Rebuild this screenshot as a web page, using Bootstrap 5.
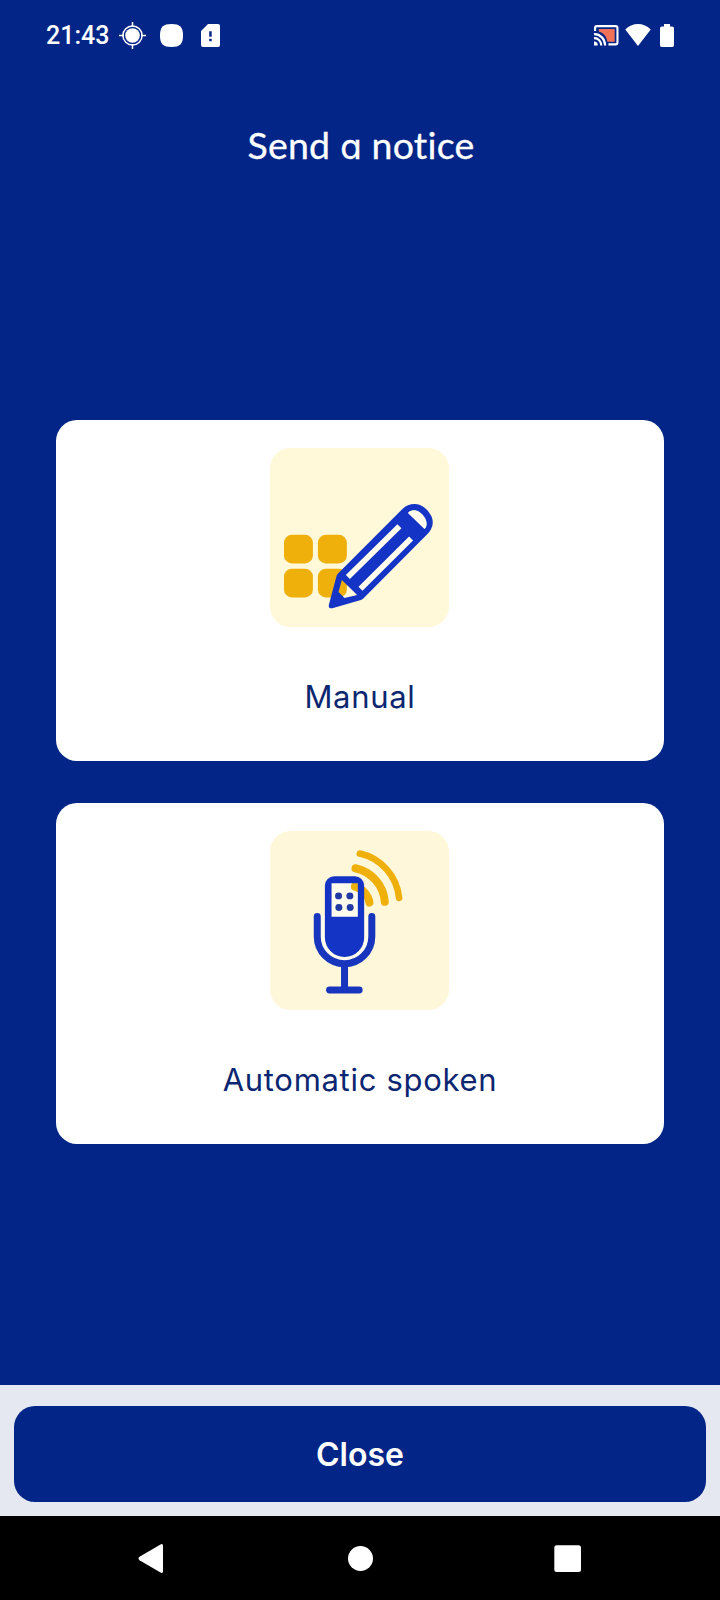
<!DOCTYPE html>
<html lang="en">
<head>
<meta charset="utf-8">
<meta name="viewport" content="width=device-width, initial-scale=1">
<title>Send a notice</title>
<link href="https://cdn.jsdelivr.net/npm/bootstrap@5.3.0/dist/css/bootstrap.min.css" rel="stylesheet">
<style>
body{background:#032587;font-family:Inter,"Noto Sans",sans-serif;height:1600px;overflow:hidden}
svg{display:block;flex:none}
.status{height:70px;padding:0 46px 0 46px}
.clock{font:500 25px/30px Roboto,sans-serif;width:73px;padding-top:2px}
.blob-icon{margin-left:14px}
.sim-icon{margin-left:18px}
.wifi-icon{margin-left:6px}
.battery-icon{margin-left:9px}
.title{font:400 37.5px/46px Lato,sans-serif;margin:52px 0 0;height:46px;white-space:nowrap;font-variant-ligatures:none;letter-spacing:.2px;-webkit-text-stroke:.3px #fff;padding-left:2px}
.title span{font-family:Inter,sans-serif;font-size:35px;font-feature-settings:"cv11"}
.choices{margin-top:252px;padding:0 56px;gap:42px}
.choice{height:341px;border-radius:21px;padding-top:28px;color:#0c2671;font-size:31px;font-weight:400;line-height:40px;letter-spacing:.7px}
.choice svg{width:179px;height:179px;margin:0 1px 50px 0}
.footer-bar{height:131px;background:#e5e8f0;padding:21px 14px 14px}
.btn-close-notice,.btn-close-notice:hover{height:96px;border-radius:21px;background:#032587;color:#fff;font-size:32px;font-weight:600;border:0;padding-top:8px}
.sysnav{height:84px;background:#000}
</style>
</head>
<body class="d-flex flex-column">
<header class="status d-flex justify-content-between align-items-center text-white">
  <div class="d-flex align-items-center">
    <div class="clock">21:43</div>
    <svg width="27" height="27" viewBox="0 0 27 27"><g fill="none" stroke="#fff" stroke-width="1.5"><circle cx="13.5" cy="13.5" r="9.6"/><path d="M13.5 0v5M13.5 22v5M0 13.5h5M22 13.5h5"/></g><circle cx="13.5" cy="13.5" r="7.3" fill="#fff"/></svg>
    <svg class="blob-icon" width="23" height="23" viewBox="0 0 23 23"><path fill="#fff" d="M11.5 0C20 0 23 3 23 11.5S20 23 11.5 23 0 20 0 11.5 3 0 11.5 0Z"/></svg>
    <svg class="sim-icon" width="19" height="23" viewBox="0 0 19 23"><path fill="#fff" fill-rule="evenodd" d="M7 0h10q2 0 2 2v19q0 2-2 2H2q-2 0-2-2V7ZM8.2 7.3v5.5h2.5V7.3Zm0 7.5v2.4h2.5v-2.4Z"/></svg>
  </div>
  <div class="d-flex align-items-center">
    <svg width="25" height="21" viewBox="0 0 26 21" preserveAspectRatio="none"><path d="M5 4h16.5v12.8H14Q12 8 5 6.6Z" fill="#f27258"/><g fill="none" stroke="#fff"><path stroke-width="2.2" d="M1.1 6V3q0-1.9 1.9-1.9h19.5q1.9 0 1.9 1.9v14.5q0 1.9-1.9 1.9H15"/><path stroke-width="2.2" d="M0 9.2A11 11 0 0 1 11.5 20.5M0 13.2A7 7 0 0 1 7.5 20.5"/></g><path fill="#fff" d="M0 16.5a4 4 0 0 1 4 4H0Z"/></svg>
    <svg class="wifi-icon" width="26" height="22" viewBox="0 0 27 22" preserveAspectRatio="none"><path fill="#fff" d="M13.5 22 .3 5.5Q6 0 13.5 0t13.2 5.5Z"/></svg>
    <svg class="battery-icon" width="14" height="23" viewBox="0 0 14 23"><path fill="#fff" d="M4 0h6v2.5h2.2Q14 2.5 14 4.3v16.9q0 1.8-1.8 1.8H1.8Q0 23 0 21.2V4.3q0-1.8 1.8-1.8H4Z"/></svg>
  </div>
</header>
<h1 class="title text-center text-white">Send <span>a</span> notice</h1>
<main class="choices d-flex flex-column flex-grow-1">
  <a class="choice bg-white d-flex flex-column align-items-center text-decoration-none" href="#">
    <svg viewBox="30 23 538 538"><rect x="30" y="23" width="538" height="538" rx="62" fill="#fff8d9"/>
      <g fill="#efb00c"><rect x="72" y="284" width="87" height="86" rx="24"/><rect x="174" y="284" width="87" height="86" rx="24"/><rect x="72" y="386" width="87" height="86" rx="24"/><rect x="174" y="386" width="87" height="86" rx="24"/></g>
      <path d="M252 399 413 245 466 298 306 458Z" fill="#fffbed"/>
      <path fill="#1434c6" fill-rule="evenodd" d="M207 494 230 408Q231 403 236 399L428 206C442 192 463 188 481 194Q502 203 514 226C524 246 519 264 504 281L312 474Q308 478 303 480L220 504Q204 507 207 494ZM445 218 494 266C501 261 502 246 495 237L473 215C464 208 450 210 445 218ZM258 405 270 417 425 264 413 252ZM296 440 308 452 460 301 448 289ZM246 420 236 456 254 474 292 465Z"/>
      <path d="M445 218 494 266C504 261 503 241 493 229Q483 215 470 211C460 208 450 211 445 218Z" fill="#fffbed"/></svg>
    <span>Manual</span>
  </a>
  <a class="choice bg-white d-flex flex-column align-items-center text-decoration-none" href="#">
    <svg viewBox="30 33 538 538"><rect x="30" y="33" width="538" height="538" rx="62" fill="#fff7d9"/>
      <path fill="#fffbed" d="M205 180h98v170a49 49 0 0 1-98 0Z"/>
      <g fill="none" stroke="#efb00c" stroke-linecap="round"><path stroke-width="20" d="M300 101A151 151 0 0 1 418 234"/><path stroke-width="24" d="M287 145A112 112 0 0 1 375 246"/><path stroke-width="24" d="M285 200A60 60 0 0 1 329 248"/></g>
      <path fill="none" stroke="#fffbed" stroke-width="12" d="M188 290v62a66 66 0 0 0 132 0v-62"/>
      <path fill="#1434c6" fill-rule="evenodd" d="M223 169h62a28 28 0 0 1 28 28v156a59 59 0 0 1-118 0V197a28 28 0 0 1 28-28ZM215 190V291H294V190Z"/>
      <g fill="none" stroke="#1836bd" stroke-width="21" stroke-linecap="round"><path d="M172 290v60a82 82 0 0 0 164 0v-60M254 436v72M209 511h89"/></g>
      <g fill="#2039a4"><circle cx="236" cy="228" r="10.5"/><circle cx="270" cy="228" r="10.5"/><circle cx="237" cy="263" r="10.5"/><circle cx="271" cy="263" r="10.5"/></g></svg>
    <span>Automatic spoken</span>
  </a>
</main>
<footer>
  <div class="footer-bar"><button class="btn btn-close-notice w-100" type="button">Close</button></div>
  <nav class="sysnav" aria-label="System">
    <svg width="720" height="84" viewBox="0 0 720 84" fill="#fff"><path d="M139.5 40.8 160.5 28.5q2.5-1.2 2.5 1.2v25.6q0 2.4-2.5 1.2L139.5 44.2q-2-1.7 0-3.4Z"/><circle cx="360.5" cy="42.5" r="12.5"/><rect x="554.3" y="29.3" width="26.7" height="26.7" rx="2.5"/></svg>
  </nav>
</footer>
<script src="https://cdn.jsdelivr.net/npm/bootstrap@5.3.0/dist/js/bootstrap.bundle.min.js"></script>
</body>
</html>
